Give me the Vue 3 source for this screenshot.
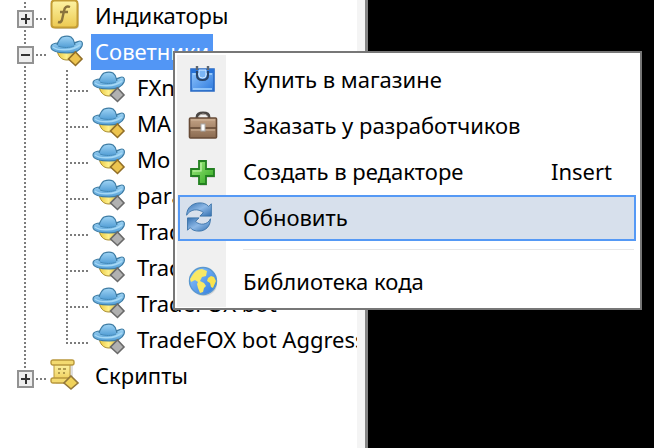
<script setup>
import { ref } from "vue";

const selected = ref("advisors");
const activeCommand = ref("refresh");

const groups = ref([
  { id: "indicators", label: "Индикаторы", icon: "function", open: false, items: [] },
  {
    id: "advisors",
    label: "Советники",
    icon: "advisor",
    open: true,
    items: [
      { label: "FXn", source: false },
      { label: "MA", source: true },
      { label: "Mo", source: true },
      { label: "para", source: false },
      { label: "Trad", source: false },
      { label: "Trad", source: false },
      { label: "TradeFOX bot", source: false },
      { label: "TradeFOX bot Aggressive", source: false }
    ]
  },
  { id: "scripts", label: "Скрипты", icon: "script", open: false, items: [] }
]);

const commands = [
  { id: "buy", label: "Купить в магазине" },
  { id: "order", label: "Заказать у разработчиков" },
  { id: "create", label: "Создать в редакторе", shortcut: "Insert" },
  { id: "refresh", label: "Обновить" },
  { id: "library", label: "Библиотека кода", separated: true }
];
</script>

<template>
  <main class="terminal">
    <svg class="defs" aria-hidden="true">
      <defs>
        <linearGradient id="hat" x1="0" y1="0" x2="0" y2="1">
          <stop offset="0" stop-color="#9fd4f5" />
          <stop offset="1" stop-color="#549fd6" />
        </linearGradient>
        <linearGradient id="gold" x1="0" y1="0" x2="1" y2="0">
          <stop offset="0" stop-color="#e8c53c" />
          <stop offset="0.5" stop-color="#fff08a" />
          <stop offset="1" stop-color="#d9b53a" />
        </linearGradient>
        <linearGradient id="panel" x1="0" y1="0" x2="0" y2="1">
          <stop offset="0" stop-color="#fdf3a4" />
          <stop offset="1" stop-color="#ecc950" />
        </linearGradient>
        <linearGradient id="blue" x1="0" y1="0" x2="1" y2="1">
          <stop offset="0" stop-color="#94c9ff" />
          <stop offset="1" stop-color="#2c78dc" />
        </linearGradient>
        <linearGradient id="brown" x1="0" y1="0" x2="0" y2="1">
          <stop offset="0" stop-color="#c4a386" />
          <stop offset="1" stop-color="#8a6a50" />
        </linearGradient>
        <linearGradient id="green" x1="0" y1="0" x2="1" y2="1">
          <stop offset="0" stop-color="#a5ee83" />
          <stop offset="1" stop-color="#2ca51d" />
        </linearGradient>
        <linearGradient id="steel" x1="0" y1="0" x2="1" y2="1">
          <stop offset="0" stop-color="#3470b0" />
          <stop offset="0.5" stop-color="#8db8e6" />
          <stop offset="1" stop-color="#3470b0" />
        </linearGradient>
        <symbol id="advisor" viewBox="0 0 34 34">
          <path d="M7 15c1 6 4 10 10 10s9-4 9-10z" fill="url(#gold)" stroke="#a98c2d" />
          <path d="M1 12c0-3 3-4 8-4h14c3 0 5-2 7-2s3 2 2 5c-2 5-8 7-15 7C8 18 1 16 1 12z" fill="url(#hat)" stroke="#3d7ba3" stroke-width="1.2" />
          <path d="M3 12c5 4 19 4 27-2" fill="none" stroke="#a5d8f5" stroke-width="1.6" />
          <path d="M7 10c1-3 2-6 5-8 3-1 7-1 9 0 3 2 3 5 4 8-4 3-14 3-18 0z" fill="url(#hat)" />
          <path d="M7 10c1-3 2-6 5-8 3-1 7-1 9 0 3 2 3 5 4 8" fill="none" stroke="#3d7ba3" stroke-width="1.2" />
          <path d="M8 11c5 2 12 2 16 0" fill="none" stroke="#4289b9" />
        </symbol>
      </defs>
    </svg>

    <nav class="navigator" aria-label="Навигатор">
      <ul class="tree">
        <li v-for="group in groups" :key="group.id">
          <div class="row">
            <span class="guide">
              <button
                type="button"
                class="expander"
                :class="{ open: group.open }"
                :aria-expanded="group.open"
                :aria-label="group.label"
                @click="group.open = !group.open"
              ></button>
            </span>
            <svg v-if="group.icon === 'function'" class="node-icon" viewBox="0 0 34 34">
              <rect x="3" y="3" width="26" height="27" rx="4" fill="#999" opacity=".4" />
              <rect x="1.5" y="1.5" width="26" height="27" rx="3" fill="url(#panel)" stroke="#c39c34" stroke-width="2" />
              <path d="M20 8q-5-2-6 4l-2 9q-1 3-4 2M10 13h8" fill="none" stroke="#8a733c" stroke-width="2.4" />
            </svg>
            <svg v-else-if="group.icon === 'advisor'" class="node-icon" viewBox="0 0 34 34">
              <use href="#advisor" />
              <path d="M25.5 17l6.500 7-6.500 6.500-7-6.500z" fill="#edc44f" stroke="#926f28" stroke-width="1.600" />
            </svg>
            <svg v-else class="node-icon" viewBox="0 0 34 34">
              <path d="M6 5h17v20H6z" fill="#999" opacity=".3" />
              <path d="M4 5h16v18H4z" fill="url(#panel)" stroke="#b9983c" />
              <rect x="1" y="1" width="23" height="5" rx="2" fill="#f3da70" stroke="#b9983c" stroke-width="1.4" />
              <rect x="1" y="19" width="20" height="5" rx="2" fill="#f3da70" stroke="#b9983c" stroke-width="1.4" />
              <path d="M8 10h3m2 0h3M8 14h2m3 0h2" stroke="#98823d" stroke-width="1.4" />
              <path d="M21 17l7 7-7 6-7-6z" fill="#f0d25a" stroke="#94783a" stroke-width="1.6" />
            </svg>
            <a
              href="#"
              class="label"
              :class="{ selected: selected === group.id }"
              @click.prevent="selected = group.id"
            >{{ group.label }}</a>
          </div>

          <ul v-if="group.open && group.items.length" class="children">
            <li v-for="(item, index) in group.items" :key="index" class="row">
              <span class="guide nested"></span>
              <svg class="node-icon" viewBox="0 0 34 34">
                <use href="#advisor" />
                <path
                  d="M25.5 17l6.500 7-6.500 6.500-7-6.500z"
                  :fill="item.source ? '#edc44f' : '#b1b1b1'"
                  :stroke="item.source ? '#926f28' : '#696969'"
                  stroke-width="1.6"
                />
              </svg>
              <a href="#" class="label" @click.prevent>{{ item.label }}</a>
            </li>
          </ul>
        </li>
      </ul>
    </nav>

    <div class="menu" role="menu">
      <template v-for="command in commands" :key="command.id">
        <div v-if="command.separated" class="separator" role="separator"></div>
        <button
          type="button"
          class="command"
          :class="{ active: activeCommand === command.id }"
          role="menuitem"
          @mouseenter="activeCommand = command.id"
        >
          <span class="command-icon">
            <svg v-if="command.id === 'buy'" viewBox="0 0 30 30">
              <path d="M3 5h23v22H3z" fill="url(#blue)" stroke="#2869c4" stroke-width="1.6" />
              <path d="M3 5h23v4H3z" fill="#2873d8" />
              <path d="M5 10h19M5 25h19" stroke="#a7d5ff" stroke-width="1.5" />
              <path d="M9 2v4m11-4v4" stroke="#5d6671" stroke-width="2.4" />
              <path d="M9 7v4q0 5 5.5 5t5.5-5V7" fill="none" stroke="#284469" stroke-width="2.2" />
              <path d="M11 6v5q0 3 3.5 3t3.5-3V6z" fill="#7ab5f5" stroke="#d8edff" />
            </svg>
            <svg v-else-if="command.id === 'order'" viewBox="0 0 30 30">
              <path d="M9 9V7q0-4 6-4t6 4v2" fill="none" stroke="#4b4744" stroke-width="2.8" />
              <path d="M10 8q1-4 5-4t5 3" fill="none" stroke="#bab4ae" />
              <rect x="1.5" y="8" width="27" height="20" rx="1" fill="url(#brown)" stroke="#674b37" stroke-width="1.6" />
              <path d="M2 18h26" stroke="#674b37" stroke-width="1.6" />
              <path d="M3 10h24M3 20h24" stroke="#d1b69b" />
              <rect x="13" y="14" width="4" height="7" fill="#fff" stroke="#aaa" />
            </svg>
            <svg v-else-if="command.id === 'create'" viewBox="0 0 30 30">
              <path d="M12 6h7v8h8v8h-8v8h-7v-8H4v-8h8z" fill="#888" opacity=".25" />
              <path d="M11 5h7v8h8v7h-8v8h-7v-8H3v-7h8z" fill="url(#green)" stroke="#238021" stroke-width="1.8" />
              <path d="M13 7v8H5" fill="none" stroke="#c7f5b1" stroke-width="1.2" />
            </svg>
            <svg v-else-if="command.id === 'refresh'" viewBox="0 0 30 34">
              <path d="M1 15C1 6 8 1 16 1c4 0 7 1 10 4l3-3v14H16l4-4C14 7 5 8 1 15z" fill="url(#steel)" stroke="#376fa6" />
              <path d="M28 19c0 9-6 14-13 14-4 0-8-1-10-4l-3 3V18h13l-4 4c5 5 14 4 17-3z" fill="url(#steel)" stroke="#376fa6" />
            </svg>
            <svg v-else viewBox="0 0 30 30">
              <ellipse cx="16" cy="18" rx="13" ry="12" fill="#888" opacity=".25" />
              <circle cx="15" cy="15" r="13.5" fill="url(#blue)" stroke="#5a98cf" stroke-width="1.4" />
              <path d="M4 10q4-7 10-7l5 2-1 5-4 1-2 4 4 2 2 3-2 2-1 4-3 1-2-5-1-4 1-2-3-2-4 2-1-3z" fill="#fae965" />
              <path d="M20 12l3-2 3 1 2 4-3 7-2-1-1-4-3-2z" fill="#fae34e" />
            </svg>
          </span>
          <span class="command-label">{{ command.label }}</span>
          <kbd v-if="command.shortcut" class="shortcut">{{ command.shortcut }}</kbd>
        </button>
      </template>
    </div>
  </main>
</template>

<style>
body {
  margin: 0;
  background: #000000;
}
</style>

<style scoped>
.terminal {
  position: relative;
  display: flex;
  min-height: 100vh;
  overflow: hidden;
  background: #000000;
  color: #000000;
  font-family: "Noto Sans", "Open Sans", sans-serif;
  font-size: 22px;
  line-height: 34px;
}

.defs {
  position: absolute;
  width: 0;
  height: 0;
}

.navigator {
  box-sizing: border-box;
  flex: 0 0 368px;
  min-width: 0;
  padding-right: 3px;
  border-right: 3px solid #858585;
  background: linear-gradient(#f4f4f4, #f4f4f4) right / 8px 100% no-repeat #ffffff;
}

.tree,
.children {
  margin: 0;
  padding: 0;
  list-style: none;
}

.tree {
  margin-top: -2px;
  margin-right: 5px;
  overflow: hidden;
}

.row {
  display: flex;
  align-items: center;
  height: 36px;
}

.guide {
  --dots-down: repeating-linear-gradient(#7c7c7c 0 2px, transparent 2px 4px);
  --dots-across: repeating-linear-gradient(90deg, #7c7c7c 0 2px, transparent 2px 4px);
  box-sizing: border-box;
  flex: 0 0 50px;
  height: 36px;
  padding: 12px 0 0 17px;
  background:
    var(--dots-down) 24px 0 / 2px 100% no-repeat,
    var(--dots-across) 36px 20px / 12px 2px no-repeat;
}

.tree > li:last-child .guide {
  background-size: 2px 20px, 12px 2px;
}

.guide.nested {
  flex-basis: 92px;
  background:
    var(--dots-down) 24px 0 / 2px 100% no-repeat,
    var(--dots-down) 66px 0 / 2px 100% no-repeat,
    var(--dots-across) 70px 20px / 20px 2px no-repeat;
}

.children > li:last-child .nested {
  background-size: 2px 100%, 2px 22px, 20px 2px;
}

.expander {
  position: relative;
  display: block;
  width: 17px;
  height: 18px;
  padding: 0;
  border: 2px solid #929292;
  background: #eeeeee;
}

.expander::before,
.expander::after {
  content: "";
  position: absolute;
  inset: 6px 2px;
  background: #333333;
}

.expander::after {
  inset: 2px 5px 2px 6px;
}

.expander.open::after {
  display: none;
}

.node-icon {
  flex: none;
  width: 34px;
  height: 34px;
}

.label {
  margin-left: 7px;
  padding: 0 4px 2px;
  color: inherit;
  text-decoration: none;
  white-space: nowrap;
}

.label.selected {
  background: #5296f5;
  color: #ffffff;
}

.menu {
  position: absolute;
  top: 51px;
  left: 173px;
  box-sizing: border-box;
  width: 469px;
  padding: 4px 4px 3px 3px;
  border: 2px solid #777777;
  background: linear-gradient(#f0f0f0, #f0f0f0) 2px 2px / 49px calc(100% - 3px) no-repeat #ffffff;
}

.command {
  box-sizing: border-box;
  display: flex;
  align-items: center;
  width: 100%;
  height: 46px;
  padding: 0 22px 2px 8px;
  border: 2px solid transparent;
  background: transparent;
  color: inherit;
  font: inherit;
  text-align: left;
}

.command.active {
  padding-left: 4px;
  border-color: #5599f5;
  background: #d7e0ec;
}

.command.active .command-icon {
  margin-right: 4px;
}

.command-icon {
  flex: 0 0 55px;
  height: 30px;
}

.command-icon svg {
  display: block;
  width: 30px;
  height: 30px;
}

.command-label {
  flex: 1;
  white-space: nowrap;
}

.shortcut {
  font: inherit;
}

.separator {
  height: 1px;
  margin: 8px 2px 9px 65px;
  background: #e8e8e8;
}
</style>
